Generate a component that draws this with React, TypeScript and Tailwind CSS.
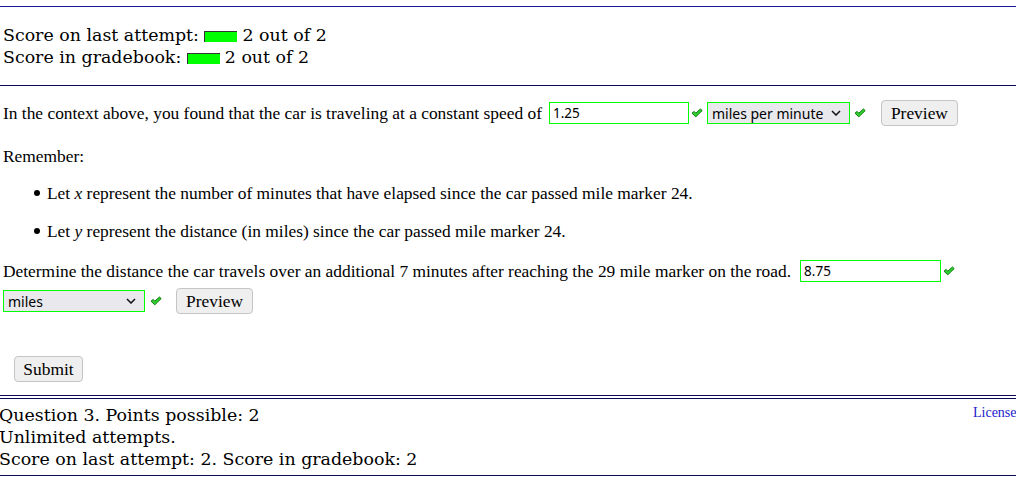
import React from 'react';

const serif = "font-['Liberation_Serif',serif]";
const dvs = "font-['DejaVu_Serif',serif]";
const sans = "font-['Noto_Sans',sans-serif]";

function Check() {
  return (
    <svg width="12" height="10" viewBox="0 0 12 10" className="shrink-0">
      <path
        d="M1 5.2 L3.2 3.4 L4.8 5.2 L9.4 1 L11.2 2.6 L4.8 8.8 Z"
        fill="#2fd12f"
        stroke="#0a7a0a"
        strokeWidth="1"
        strokeLinejoin="round"
      />
    </svg>
  );
}

function AnswerBox({ value, width }: { value: string; width: string }) {
  return (
    <div className={`${width} h-[22px] shrink-0 border border-[#00ff00] bg-white flex items-center px-[3px] text-[13.5px] text-black ${sans}`}>
      {value}
    </div>
  );
}

function SelectBox({ value, width }: { value: string; width: string }) {
  return (
    <div className={`${width} h-[22px] shrink-0 border border-[#00ff00] bg-[#e9e9ed] flex items-center justify-between pl-[4px] pr-[8px] text-[14px] text-black ${sans}`}>
      <span>{value}</span>
      <svg width="10" height="6" viewBox="0 0 10 6">
        <path d="M1 1 L5 5 L9 1" fill="none" stroke="#111" strokeWidth="1.5" />
      </svg>
    </div>
  );
}

function Btn({ label, width }: { label: string; width: string }) {
  return (
    <div className={`${width} h-[26px] shrink-0 rounded-[4px] border border-[#c4c4c4] bg-[#efefef] flex items-center justify-center text-[17.4px] text-black ${serif}`}>
      {label}
    </div>
  );
}

function Rule() {
  return <div className="h-px bg-[#0b0b55]" />;
}

export default function App() {
  return (
    <div className="w-[1016px] h-[482px] bg-white overflow-hidden text-black">
      <div className="pt-[6px]">
        <div className="h-px bg-[#1a1a99]" />
      </div>

      {/* score summary */}
      <div className={`pt-[17px] pb-[17px] pl-[3px] text-[17.4px] leading-[22px] ${dvs}`}>
        <div className="flex items-center">
          <span>Score on last attempt:&nbsp;</span>
          <span className="inline-block w-[33px] h-[11px] bg-[#00ff00] border-l border-t border-[#333] mr-[5px] mt-[2px]" />
          <span>2 out of 2</span>
        </div>
        <div className="flex items-center">
          <span>Score in gradebook:&nbsp;</span>
          <span className="inline-block w-[33px] h-[11px] bg-[#00ff00] border-l border-t border-[#333] mr-[5px] mt-[2px]" />
          <span>2 out of 2</span>
        </div>
      </div>
      <Rule />

      {/* question body */}
      <div className={`pl-[3px] text-[17.4px] ${serif}`}>
        <div className="mt-[14px] h-[26px] flex items-center whitespace-nowrap">
          <span>In the context above, you found that the car is traveling at a constant speed of</span>
          <span className="ml-[7px]"><AnswerBox value="1.25" width="w-[140px]" /></span>
          <span className="ml-[2px]"><Check /></span>
          <span className="ml-[4px]"><SelectBox value="miles per minute" width="w-[143px]" /></span>
          <span className="ml-[4px]"><Check /></span>
          <span className="ml-[15px]"><Btn label="Preview" width="w-[77px]" /></span>
        </div>

        <div className="mt-[20px] leading-[20px]">Remember:</div>

        <ul className="mt-[17px] leading-[20px] pl-[31px]">
          <li className="flex items-center">
            <span className="w-[6px] h-[6px] rounded-full bg-black mr-[7px]" />
            <span>Let <i>x</i> represent the number of minutes that have elapsed since the car passed mile marker 24.</span>
          </li>
          <li className="flex items-center mt-[18px]">
            <span className="w-[6px] h-[6px] rounded-full bg-black mr-[7px]" />
            <span>Let <i>y</i> represent the distance (in miles) since the car passed mile marker 24.</span>
          </li>
        </ul>

        <div className="mt-[19px] h-[22px] flex items-center whitespace-nowrap">
          <span>Determine the distance the car travels over an additional 7 minutes after reaching the 29 mile marker on the road.</span>
          <span className="ml-[9px]"><AnswerBox value="8.75" width="w-[141px]" /></span>
          <span className="ml-[2px]"><Check /></span>
        </div>

        <div className="mt-[6px] h-[26px] flex items-center">
          <SelectBox value="miles" width="w-[142px]" />
          <span className="ml-[5px]"><Check /></span>
          <span className="ml-[14px]"><Btn label="Preview" width="w-[77px]" /></span>
        </div>

        <div className="mt-[42px] pl-[11px]">
          <Btn label="Submit" width="w-[69px]" />
        </div>
      </div>

      <div className="mt-[13px]">
        <Rule />
        <div className="h-[2px]" />
        <Rule />
      </div>

      {/* footer info */}
      <div className={`relative pt-[5px] pb-[5px] -ml-[1px] text-[17.4px] leading-[22px] ${dvs}`}>
        <a className={`absolute left-[974px] top-[3px] whitespace-nowrap text-[14px] text-[#2222cc] ${serif}`}>License</a>
        <div>Question 3. Points possible: 2</div>
        <div>Unlimited attempts.</div>
        <div>Score on last attempt: 2. Score in gradebook: 2</div>
      </div>
      <Rule />
    </div>
  );
}
